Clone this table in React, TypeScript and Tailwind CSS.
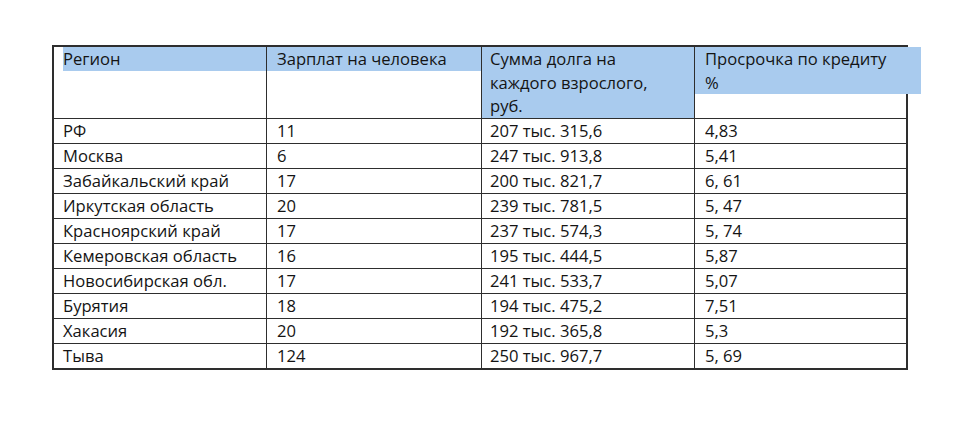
const rows: [string, string, string, string][] = [
  ["РФ", "11", "207 тыс. 315,6", "4,83"],
  ["Москва", "6", "247 тыс. 913,8", "5,41"],
  ["Забайкальский край", "17", "200 тыс. 821,7", "6, 61"],
  ["Иркутская область", "20", "239 тыс. 781,5", "5, 47"],
  ["Красноярский край", "17", "237 тыс. 574,3", "5, 74"],
  ["Кемеровская область", "16", "195 тыс. 444,5", "5,87"],
  ["Новосибирская обл.", "17", "241 тыс. 533,7", "5,07"],
  ["Бурятия", "18", "194 тыс. 475,2", "7,51"],
  ["Хакасия", "20", "192 тыс. 365,8", "5,3"],
  ["Тыва", "124", "250 тыс. 967,7", "5, 69"],
];

const cols = "grid grid-cols-[212px_215px_213px_212px]";

export default function App() {
  return (
    <div
      className="w-[960px] h-[424px] bg-white pt-[45px] pl-[52px] text-[16.6px] text-[#141414]"
      style={{ fontFamily: '"Open Sans", "Noto Sans", sans-serif' }}
    >
      <div className="w-[856px] border-2 border-[#2e2e2e]">
        {/* Header */}
        <div className={`${cols} h-[71px] leading-[23.5px]`}>
          <div>
            <div className="ml-[9px] bg-[#a9cbee]">Регион</div>
          </div>
          <div className="border-l border-[#2e2e2e]">
            <div className="bg-[#a9cbee] pl-[10px]">Зарплат на человека</div>
          </div>
          <div className="border-l border-[#2e2e2e]">
            <div className="bg-[#a9cbee] pl-[8px] h-[70.5px]">
              Сумма долга на
              <br />
              каждого взрослого,
              <br />
              руб.
            </div>
          </div>
          <div className="border-l border-[#2e2e2e]">
            <div className="bg-[#a9cbee] pl-[10px] -mr-[15px]">
              Просрочка по кредиту
              <br />%
            </div>
          </div>
        </div>

        {/* Body */}
        {rows.map((r) => (
          <div key={r[0]} className={`${cols} h-[25px] leading-[24px] border-t border-[#2e2e2e]`}>
            <div className="pl-[9px] whitespace-nowrap">{r[0]}</div>
            <div className="pl-[10px] border-l border-[#2e2e2e]">{r[1]}</div>
            <div className="pl-[8px] border-l border-[#2e2e2e]">{r[2]}</div>
            <div className="pl-[10px] border-l border-[#2e2e2e]">{r[3]}</div>
          </div>
        ))}
      </div>
    </div>
  );
}
